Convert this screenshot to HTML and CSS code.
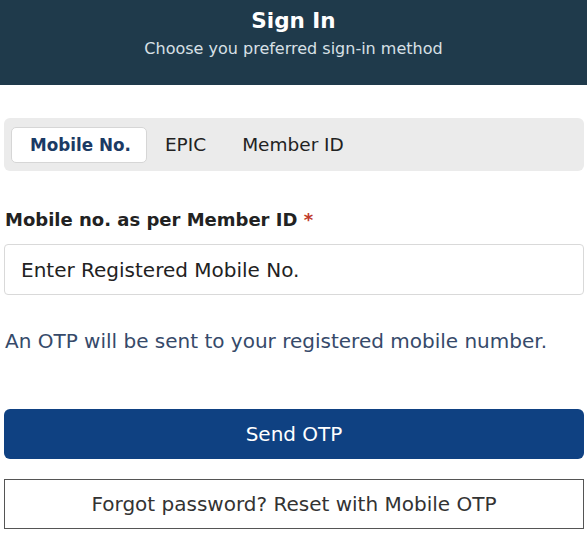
FILE: index.html
```html
<!DOCTYPE html>
<html lang="en">
<head>
<meta charset="utf-8">
<title>Sign In</title>
<link rel="stylesheet" href="styles.css">
</head>
<body>
<header class="hero">
  <h1 class="hero-title">Sign In</h1>
  <p class="hero-sub">Choose you preferred sign-in method</p>
</header>
<main class="content">
  <nav class="tabs">
    <button class="tab tab-active">Mobile No.</button>
    <button class="tab">EPIC</button>
    <button class="tab">Member ID</button>
  </nav>
  <label class="field-label" for="mob">Mobile no. as per Member ID <span class="req">*</span></label>
  <input class="field-input" id="mob" type="text" placeholder="Enter Registered Mobile No.">
  <p class="hint">An OTP will be sent to your registered mobile number.</p>
  <button class="btn-primary">Send OTP</button>
  <button class="btn-outline">Forgot password? Reset with Mobile OTP</button>
</main>
</body>
</html>
```
FILE: styles.css
```css
* { box-sizing: border-box; }
body {
  margin: 0;
  font-family: "DejaVu Sans", "Open Sans", sans-serif;
  color: #222;
  background: #fff;
}
.hero {
  background: #1f3a4b;
  height: 85px;
  text-align: center;
  padding-top: 6px;
}
.hero-title {
  margin: 0;
  font-size: 21.5px;
  font-weight: 700;
  color: #fff;
  line-height: 30px;
}
.hero-sub {
  margin: 4px 0 0;
  font-size: 16px;
  color: #d8e0e6;
  line-height: 18px;
}
.content {
  padding: 33px 3px 0 4px;
  display: flex;
  flex-direction: column;
}
.tabs {
  display: flex;
  align-items: center;
  background: #ebebeb;
  border-radius: 6px;
  height: 53px;
  padding: 0 7px;
}
.tab {
  font-family: inherit;
  font-size: 18.5px;
  background: transparent;
  border: 1px solid transparent;
  color: #222;
  height: 36px;
  padding: 0 17px;
  border-radius: 5px;
}
.tab-active {
  background: #fff;
  border-color: #d6d6d6;
  color: #1b3a64;
  font-weight: 700;
  font-size: 16.8px;
  padding: 0 15px 0 18px;
}
.field-label {
  margin-top: 37px;
  font-size: 18px;
  line-height: 24px;
  font-weight: 700;
  color: #222;
  padding-left: 1px;
}
.req { color: #c0392b; }
.field-input {
  margin-top: 12px;
  height: 51px;
  border: 1px solid #d9d9d9;
  border-radius: 4px;
  padding: 0 16px;
  font-family: inherit;
  font-size: 20px;
}
.field-input::placeholder { color: #222; opacity: 1; }
.hint {
  margin: 33px 0 0 1px;
  font-size: 20px;
  color: #364a6a;
  line-height: 26px;
}
.btn-primary {
  margin-top: 55px;
  height: 50px;
  background: #0f4182;
  color: #fff;
  border: none;
  border-radius: 6px;
  font-family: inherit;
  font-size: 20px;
}
.btn-outline {
  margin-top: 20px;
  height: 50px;
  background: #fff;
  color: #333;
  border: 1px solid #555;
  border-radius: 0;
  font-family: inherit;
  font-size: 20px;
}
```
